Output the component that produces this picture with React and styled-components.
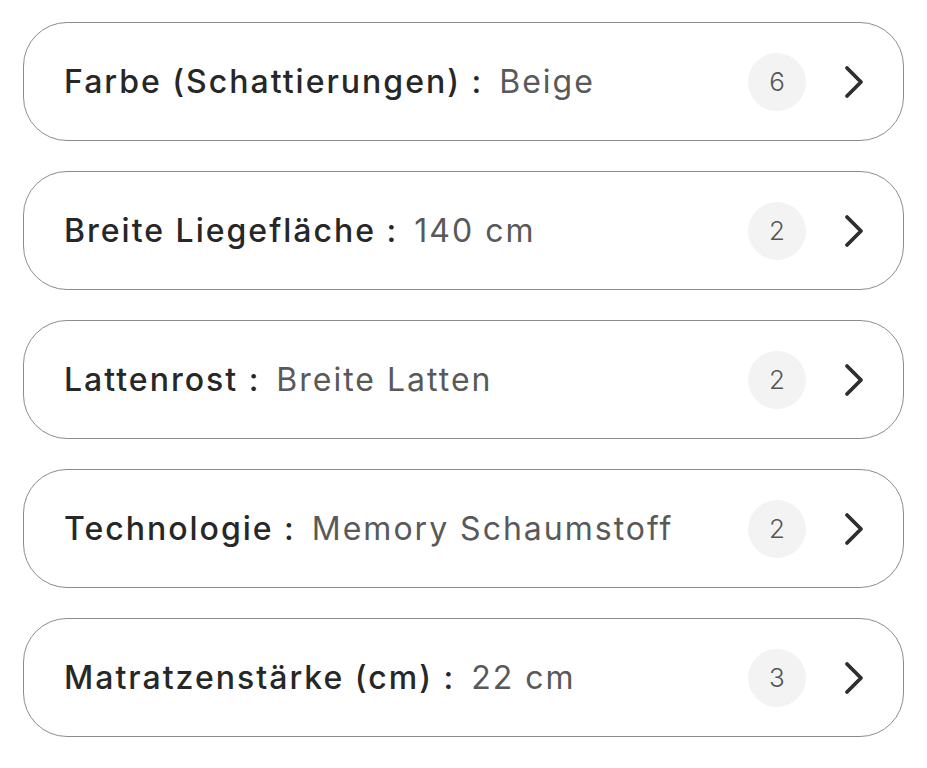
import React from 'react'
import styled, {createGlobalStyle} from 'styled-components'

const GlobalStyle = createGlobalStyle`
  body {
    margin: 0;
    background: #ffffff;
    font-family: Inter, "Open Sans", "Liberation Sans", sans-serif;
  }
`

const filters = [
  {label: 'Farbe (Schattierungen)', value: 'Beige', count: 6},
  {label: 'Breite Liegefläche', value: '140 cm', count: 2},
  {label: 'Lattenrost', value: 'Breite Latten', count: 2},
  {label: 'Technologie', value: 'Memory Schaumstoff', count: 2},
  {label: 'Matratzenstärke (cm)', value: '22 cm', count: 3},
]

function Chevron() {
  return (
    <svg width="22" height="34" viewBox="0 0 22 34" fill="none">
      <path d="M4 3 L18 17 L4 31" stroke="#2e2e2e" strokeWidth="3.8" strokeLinecap="round" strokeLinejoin="round" />
    </svg>
  )
}

function App() {
  return (
    <Page>
      <GlobalStyle />
      <List>
        {filters.map((f) => (
          <Card key={f.label}>
            <Text>
              <Label>{f.label} :</Label>
              <Value>{f.value}</Value>
            </Text>
            <Badge>{f.count}</Badge>
            <Arrow>
              <Chevron />
            </Arrow>
          </Card>
        ))}
      </List>
    </Page>
  )
}

const Page = styled.div`
  padding: 22px 23px;
`

const List = styled.div`
  display: flex;
  flex-direction: column;
  gap: 30px;
`

const Card = styled.div`
  display: flex;
  align-items: center;
  height: 119px;
  box-sizing: border-box;
  border: 1.5px solid #8c8c8c;
  border-radius: 44px;
  padding: 0 38px 0 40px;
`

const Text = styled.div`
  flex: 1;
  display: flex;
  align-items: baseline;
  gap: 16px;
  font-size: 32px;
  letter-spacing: 2px;
  white-space: nowrap;
`

const Label = styled.span`
  color: #272727;
  font-weight: 500;
`

const Value = styled.span`
  color: #595959;
  font-weight: 400;
`

const Badge = styled.div`
  width: 58px;
  height: 58px;
  border-radius: 50%;
  background: #f4f3f3;
  color: #555555;
  font-size: 26px;
  font-weight: 300;
  display: flex;
  align-items: center;
  justify-content: center;
`

const Arrow = styled.div`
  margin-left: 37px;
  display: flex;
  align-items: center;
`

export default App
